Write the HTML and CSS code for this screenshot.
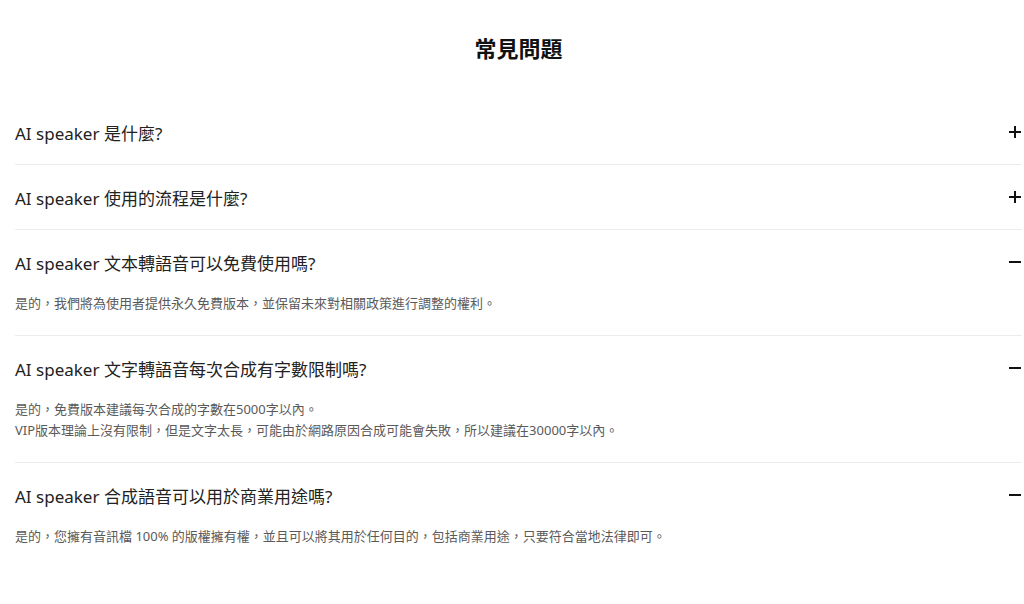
FILE: index.html
```html
<!DOCTYPE html>
<html lang="zh-Hant">
<head>
<meta charset="utf-8">
<title>常見問題</title>
<link rel="stylesheet" href="styles.css">
</head>
<body>
<section class="faq">
  <h2 class="faq-title">常見問題</h2>
  <div class="faq-item">
    <div class="faq-q"><span>AI speaker 是什麼?</span><span class="icon plus"></span></div>
  </div>
  <div class="faq-item">
    <div class="faq-q"><span>AI speaker 使用的流程是什麼?</span><span class="icon plus"></span></div>
  </div>
  <div class="faq-item open">
    <div class="faq-q"><span>AI speaker 文本轉語音可以免費使用嗎?</span><span class="icon minus"></span></div>
    <div class="faq-a">是的，我們將為使用者提供永久免費版本，並保留未來對相關政策進行調整的權利。</div>
  </div>
  <div class="faq-item open">
    <div class="faq-q"><span>AI speaker 文字轉語音每次合成有字數限制嗎?</span><span class="icon minus"></span></div>
    <div class="faq-a">是的，免費版本建議每次合成的字數在5000字以內。<br>VIP版本理論上沒有限制，但是文字太長，可能由於網路原因合成可能會失敗，所以建議在30000字以內。</div>
  </div>
  <div class="faq-item open last">
    <div class="faq-q"><span>AI speaker 合成語音可以用於商業用途嗎?</span><span class="icon minus"></span></div>
    <div class="faq-a">是的，您擁有音訊檔 100% 的版權擁有權，並且可以將其用於任何目的，包括商業用途，只要符合當地法律即可。</div>
  </div>
</section>
</body>
</html>
```
FILE: styles.css
```css
html, body {
  margin: 0;
  padding: 0;
  background: #fff;
}
body {
  font-family: "Noto Sans", "Noto Sans CJK TC", sans-serif;
  color: #1a1a1a;
}
.faq {
  padding: 0 2px 0 15px;
}
.faq-title {
  margin: 0;
  padding-top: 36px;
  height: 64px;
  font-size: 22px;
  line-height: 24px;
  font-weight: 700;
  text-align: center;
  color: #111;
}
.faq-item {
  border-bottom: 1px solid #ececec;
}
.faq-item.last {
  border-bottom: none;
}
.faq-q {
  height: 64px;
  display: flex;
  align-items: center;
  justify-content: space-between;
  font-size: 17px;
  color: #222;
}
.faq-a {
  font-size: 13px;
  line-height: 21px;
  color: #5a5a5a;
  margin-top: -1px;
  padding-bottom: 21px;
}
.icon {
  position: relative;
  width: 12px;
  height: 12px;
  margin-right: 1px;
  flex: none;
}
.icon::before,
.icon::after {
  content: "";
  position: absolute;
  background: #111;
}
.icon::before {
  left: 0;
  right: 0;
  top: 5px;
  height: 2px;
}
.plus::after {
  top: 0;
  bottom: 0;
  left: 5px;
  width: 2px;
}
.minus::after {
  display: none;
}
```
